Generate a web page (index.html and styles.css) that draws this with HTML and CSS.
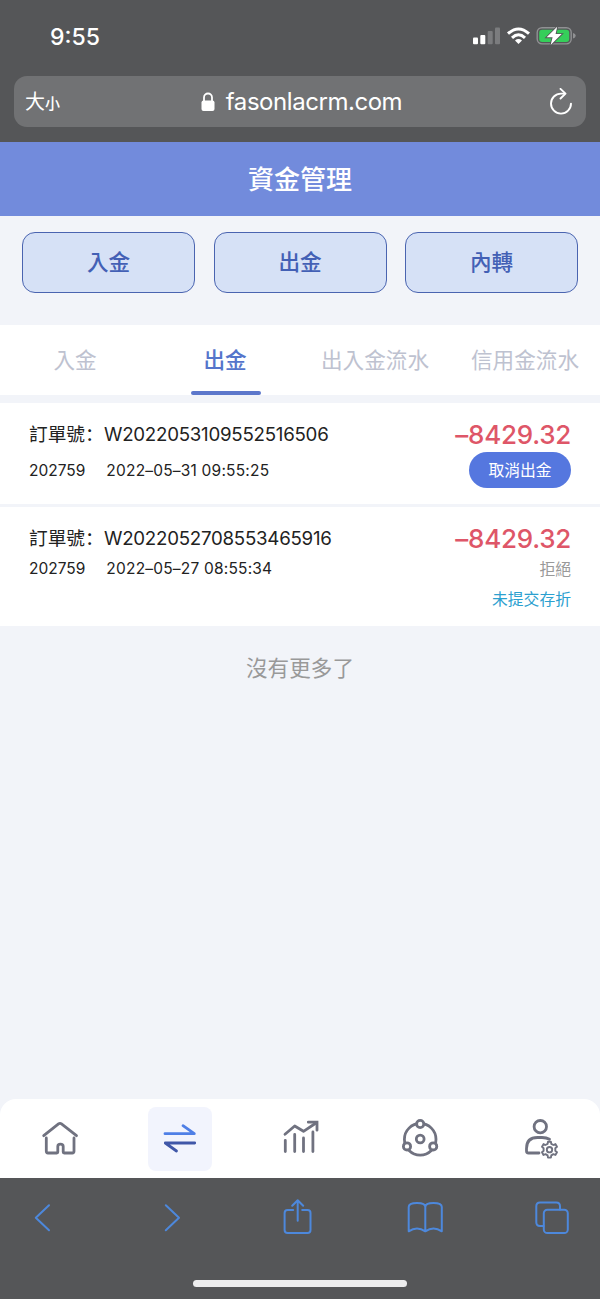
FILE: index.html
```html
<!DOCTYPE html>
<html lang="zh-Hant">

<head>
    <meta charset="UTF-8">
    <meta name="viewport" content="width=device-width, initial-scale=1.0">
    <title>資金管理</title>
    <link rel="stylesheet" href="styles.css">
</head>

<body>
    <div class="browser-top">
        <div class="status">
            <span class="time">9:55</span>
            <svg class="status-icons" width="104" height="20" viewBox="0 0 104 20">
                <g fill="#fff">
                    <rect x="1" y="11.4" width="5" height="6.8" rx="1" />
                    <rect x="8.3" y="9" width="5" height="9.2" rx="1" />
                    <g fill="#7b7c7e">
                        <rect x="15.7" y="5" width="5" height="13.2" rx="1" />
                        <rect x="23" y="1.5" width="5" height="16.7" rx="1" />
                    </g>
                </g>
                <g fill="none" stroke="#fff" stroke-width="3">
                    <path d="M36 7.7Q46.5 -1.7 57 7.7" />
                    <path d="M40 11.8Q46.5 5.8 53 11.8" />
                </g>
                <path d="M43 14.4Q46.5 11.5 50 14.4L46.5 18Z" fill="#fff" />
                <rect x="65.2" y="1.7" width="34" height="16.2" rx="4.8" fill="none" stroke="#909193" stroke-width="1.4" />
                <path d="M101 7Q103.7 7.8 103.7 9.8Q103.7 11.8 101 12.6Z" fill="#909193" />
                <rect x="67.2" y="3.7" width="30" height="12.2" rx="3" fill="#35ce5a" />
                <path d="M85.2 0.8L74.6 11.3H80.6L78.6 19L89.7 8.1H83.6Z" fill="#fff" stroke="#555658" stroke-width="1.8" paint-order="stroke" />
            </svg>
        </div>
        <div class="address">
            <div class="text-size"><span class="big">大</span><span class="small">小</span></div>
            <div class="host">
                <svg width="14" height="20" viewBox="0 0 14 20">
                    <rect x="0.5" y="8.5" width="13" height="10.5" rx="2" fill="#fff" />
                    <path d="M3 9V5.5a4 4 0 0 1 8 0V9" fill="none" stroke="#fff" stroke-width="1.8" />
                </svg>
                <span>fasonlacrm.com</span>
            </div>
            <svg class="reload" width="24" height="28" viewBox="0 0 24 28" fill="none" stroke="#fff" stroke-width="1.9" stroke-linecap="round" stroke-linejoin="round">
                <path d="M15.5 5.6H12A10 10 0 1 0 22 15.6" />
                <path d="M11.5 0.9L16.5 5.6L11.5 10.5" />
            </svg>
        </div>
    </div>

    <h1 class="title">資金管理</h1>

    <div class="actions">
        <button class="action">入金</button>
        <button class="action">出金</button>
        <button class="action">內轉</button>
    </div>

    <div class="tabs">
        <div class="tab">入金</div>
        <div class="tab active">出金</div>
        <div class="tab">出入金流水</div>
        <div class="tab">信用金流水</div>
    </div>

    <div class="list">
        <div class="record first">
            <div class="info">
                <div class="order"><span class="label">訂單號<span class="colon" lang="zh-Hans">：</span></span><span class="number">W2022053109552516506</span></div>
                <div class="meta"><span class="account">202759</span><span class="date">2022–05–31 09:55:25</span></div>
            </div>
            <div class="result">
                <div class="amount">–8429.32</div>
                <button class="cancel">取消出金</button>
            </div>
        </div>
        <div class="record second">
            <div class="info">
                <div class="order"><span class="label">訂單號<span class="colon" lang="zh-Hans">：</span></span><span class="number">W2022052708553465916</span></div>
                <div class="meta"><span class="account">202759</span><span class="date">2022–05–27 08:55:34</span></div>
            </div>
            <div class="result">
                <div class="amount">–8429.32</div>
                <div class="state">拒絕</div>
                <div class="reason">未提交存折</div>
            </div>
        </div>
    </div>
    <div class="no-more">沒有更多了</div>

    <div class="nav">
        <div class="nav-item">
            <svg class="icon" viewBox="0 0 64 64">
                <path d="M15.7 28.7L30.5 16.9Q32 15.8 33.5 16.9L48.5 28.7" />
                <path d="M18.3 31V44.3Q18.3 46 20 46H28.8Q29.8 46 29.8 45V39.5Q29.8 37.2 32.4 37.2Q35.2 37.2 35.2 39.5V45Q35.2 46 36.2 46H44.3Q46 46 46 44.3V31" />
            </svg>
        </div>
        <div class="nav-item current">
            <svg class="icon" viewBox="0 0 64 64">
                <path d="M17 26.7H46.3L35 18.7" stroke="#4f7fe6" />
                <path d="M46.7 36H17.3L28.5 44" stroke="#4057a8" />
            </svg>
        </div>
        <div class="nav-item">
            <svg class="icon" viewBox="0 0 64 64">
                <path d="M17.3 33.3V44.5M26.7 27.5V44.5M35.5 31V44.5M44.9 25V44.5" />
                <path d="M17 27.3L26.7 19L35.5 24.3L48 16" />
                <path d="M40.3 15.2H49V23.2" stroke-linejoin="miter" />
            </svg>
        </div>
        <div class="nav-item">
            <svg class="icon" viewBox="0 0 64 64">
                <circle cx="32.2" cy="32.3" r="15.8" />
                <g fill="#fff">
                    <circle cx="32.2" cy="17" r="3.6" />
                    <circle cx="19" cy="39.4" r="3.6" />
                    <circle cx="45.2" cy="39.4" r="3.6" />
                    <circle cx="32.2" cy="32" r="3.9" />
                </g>
            </svg>
        </div>
        <div class="nav-item">
            <svg class="icon" viewBox="0 0 64 64">
                <circle cx="32.3" cy="19.7" r="6.2" />
                <path d="M31 46H20.5Q18.5 46 18.5 44V41.5Q18.5 30.5 29.5 30.5H34Q38.5 30.5 41.5 32.2" />
                <path class="gear" d="M39.6 36.9L40 34.8H42.9L43.3 36.9L45.4 38L47.4 37.1L49 39.7L47.3 41.2V43.8L49 45.3L47.4 48L45.4 47.1L43.3 48.4L42.9 50.6H40L39.6 48.4L37.5 47.1L35.5 48L34 45.3L35.6 43.8V41.2L34 39.7L35.5 37.1L37.5 38Z" />
                <circle class="gear" cx="41.5" cy="42.7" r="2.7" />
            </svg>
        </div>
    </div>

    <div class="browser-bottom">
        <div class="tools">
            <svg class="tool" viewBox="0 0 40 44">
                <path d="M27 9.3L13.8 21.8L27 34.3" />
            </svg>
            <svg class="tool" viewBox="0 0 40 44">
                <path d="M15.8 9.3L29 21.8L15.8 34.3" />
            </svg>
            <svg class="tool" viewBox="0 0 40 44">
                <path d="M16.2 14H10.6Q7.6 14 7.6 17V34Q7.6 37 10.6 37H30.5Q33.5 37 33.5 34V17Q33.5 14 30.5 14H25.2" />
                <path d="M20.7 24.8V4.6M15.2 9.8L20.7 4.3L26.2 9.8" />
            </svg>
            <svg class="tool" viewBox="0 0 40 44">
                <path d="M20.3 11V35.3Q12 29.8 3.7 35.3V11Q3.7 7 12 7Q20.3 7 20.3 11Q20.3 7 28.5 7Q36.8 7 36.8 11V35.3Q28.5 29.8 20.3 35.3" />
            </svg>
            <svg class="tool" viewBox="0 0 40 44">
                <path d="M11.5 30H8Q4.3 30 4.3 26.3V10.2Q4.3 6.5 8 6.5H24.3Q28 6.5 28 10.2V13.5" />
                <rect x="11.8" y="13.7" width="24" height="23.4" rx="3.6" />
            </svg>
        </div>
        <div class="home-bar"></div>
    </div>
</body>

</html>
```
FILE: styles.css
```css
* {
    box-sizing: border-box;
}

body {
    margin: 0;
    height: 1299px;
    display: flex;
    flex-direction: column;
    background-color: #f2f4f9;
    font-family: Inter, "Noto Sans CJK TC", sans-serif;
    color: #222;
}

svg {
    display: block;
}

button {
    padding: 0;
    font-family: inherit;
}

.browser-top {
    height: 142px;
    padding: 0 14px;
    background-color: #555658;
    color: #fff;
}

.status {
    height: 76px;
    padding: 26px 10px 0 36px;
    display: flex;
    justify-content: space-between;
}

.time {
    font-size: 23px;
    line-height: 22px;
    font-weight: 500;
}

.address {
    height: 51px;
    padding: 0 13px 0 11px;
    display: grid;
    grid-template-columns: 60px 1fr 60px;
    align-items: center;
    border-radius: 13px;
    background-color: #717274;
}

.text-size {
    padding-top: 2px;
    line-height: 30px;
}

.big {
    font-size: 20px;
}

.small {
    font-size: 15px;
    font-weight: 500;
}

.host {
    padding: 1px 0 0 5px;
    display: flex;
    justify-content: center;
    align-items: center;
    gap: 11px;
    font-size: 24px;
    line-height: 30px;
    letter-spacing: -0.45px;
}

.reload {
    justify-self: end;
}

.title {
    margin: 0;
    height: 74px;
    line-height: 75px;
    background-color: #728bdc;
    color: #fff;
    font-size: 26px;
    font-weight: 500;
    text-align: center;
}

.actions {
    height: 109px;
    padding: 16px 22px 0;
    display: flex;
    gap: 18.5px;
}

.action {
    flex: 1;
    height: 61px;
    padding-bottom: 4px;
    border: 1.5px solid #4a64b0;
    border-radius: 13px;
    background-color: #d6e1f6;
    color: #4360b5;
    font-size: 21.6px;
    font-weight: 500;
}

.tabs {
    height: 70px;
    display: flex;
    background-color: #fff;
}

.tab {
    width: 150px;
    display: flex;
    flex-direction: column;
    align-items: center;
    line-height: 70px;
    color: #bec2d0;
    font-size: 21.6px;
    white-space: nowrap;
}

.active {
    color: #5575cb;
    font-weight: 500;
}

.active::after {
    content: "";
    width: 70px;
    height: 4px;
    margin: -4px 0 0 2px;
    border-radius: 2px;
    background-color: #5c77cb;
}

.list {
    margin-top: 8px;
    display: flex;
    flex-direction: column;
    gap: 3px;
}

.record {
    padding: 16px 29px 0;
    display: flex;
    justify-content: space-between;
    background-color: #fff;
}

.first {
    height: 101px;
}

.second {
    height: 119px;
}

.info {
    padding-top: 1px;
}

.order {
    display: flex;
    height: 30px;
    line-height: 30px;
    font-size: 18.7px;
}

.label {
    width: 75px;
}

.colon {
    font-family: "Noto Sans CJK SC", sans-serif;
    line-height: 1;
}

.number {
    letter-spacing: -0.25px;
}

.meta {
    display: flex;
    gap: 21px;
    margin-top: 10px;
    line-height: 22px;
    font-size: 15.5px;
}

.date {
    letter-spacing: 0.2px;
}

.second .meta {
    margin-top: 4px;
}

.result {
    display: flex;
    flex-direction: column;
    align-items: flex-end;
}

.amount {
    line-height: 31px;
    font-size: 26px;
    font-weight: 500;
    letter-spacing: -0.25px;
    color: #de5668;
}

.cancel {
    width: 102px;
    height: 36px;
    margin-top: 2px;
    padding-bottom: 2px;
    border: 0;
    border-radius: 18px;
    background-color: #5577df;
    color: #fff;
    font-size: 15.8px;
}

.state,
.reason {
    line-height: 30px;
    font-size: 15.8px;
}

.state {
    padding-top: 1px;
    color: #999;
}

.reason {
    color: #2ba0cf;
}

.no-more {
    margin-top: 26px;
    line-height: 32px;
    text-align: center;
    font-size: 21.6px;
    color: #999;
}

.nav {
    height: 79px;
    margin-top: auto;
    padding-top: 8px;
    display: flex;
    border-radius: 16px 16px 0 0;
    background-color: #fff;
}

.nav-item {
    width: 120px;
    display: flex;
    justify-content: center;
}

.icon {
    width: 64px;
    height: 64px;
    border-radius: 8px;
    fill: none;
    stroke: #707280;
    stroke-width: 2.8;
    stroke-linecap: round;
    stroke-linejoin: round;
}

.current .icon {
    background-color: #f2f4fd;
}

.icon .gear {
    stroke-width: 1.9;
}

.browser-bottom {
    height: 121px;
    padding-top: 18px;
    background-color: #555658;
}

.tools {
    padding: 0 28px 0 22px;
    display: flex;
    justify-content: space-between;
}

.tool {
    width: 40px;
    height: 44px;
    fill: none;
    stroke: #4d88dc;
    stroke-width: 2;
    stroke-linecap: round;
    stroke-linejoin: round;
}

.home-bar {
    width: 214px;
    height: 7px;
    margin: 40px auto 0;
    border-radius: 4px;
    background-color: #ededee;
}
```
